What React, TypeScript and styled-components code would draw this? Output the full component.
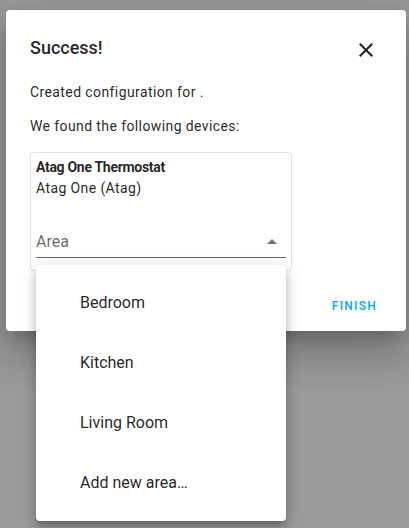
import React from 'react';
import styled, { createGlobalStyle } from 'styled-components';

const GlobalStyle = createGlobalStyle`
	html, body {
		margin: 0;
		padding: 0;
	}
	body {
		font-family: Roboto, 'Noto Sans', sans-serif;
		background: #9a9a9a;
		-webkit-font-smoothing: antialiased;
	}
`;

const Scrim = styled.div`
	min-height: 528px;
	padding: 10px 3px 0 6px;
	box-sizing: border-box;
	background: #9a9a9a;
`;

const Dialog = styled.section`
	position: relative;
	width: 400px;
	background: #fff;
	border-radius: 4px;
	box-shadow: 0 11px 15px -7px rgba(0, 0, 0, 0.2), 0 24px 38px 3px rgba(0, 0, 0, 0.14),
		0 9px 46px 8px rgba(0, 0, 0, 0.12);
`;

const Header = styled.header`
	display: flex;
	justify-content: space-between;
	align-items: center;
	padding: 26px 28px 0 24px;
	height: 24px;
`;

const Title = styled.h2`
	margin: 0;
	font-size: 18px;
	line-height: 24px;
	font-weight: 500;
	color: rgba(0, 0, 0, 0.87);
`;

const CloseButton = styled.button`
	display: flex;
	width: 24px;
	height: 24px;
	padding: 0;
	margin-top: 4px;
	border: 0;
	background: none;
	color: rgba(0, 0, 0, 0.87);
	cursor: pointer;
`;

const Content = styled.div`
	padding: 22px 24px 0;
`;

const Text = styled.p`
	margin: 0 0 14px;
	font-size: 14px;
	line-height: 20px;
	letter-spacing: 0.4px;
	color: rgba(0, 0, 0, 0.87);
`;

const DeviceCard = styled.div`
	margin-top: 16px;
	width: 262px;
	box-sizing: border-box;
	border: 1px solid #e0e0e0;
	border-radius: 4px;
	padding: 4px 5px 12px;
`;

const DeviceLine = styled.div<{ $bold?: boolean }>`
	font-size: 14px;
	line-height: 21px;
	letter-spacing: ${(p) => (p.$bold ? '-0.3px' : '0.4px')};
	font-weight: ${(p) => (p.$bold ? 700 : 400)};
	color: rgba(0, 0, 0, 0.87);
`;

const Field = styled.div`
	position: relative;
	margin-top: 31px;
	padding-bottom: 3px;
	border-bottom: 1px solid rgba(0, 0, 0, 0.6);
`;

const FieldRow = styled.div`
	display: flex;
	justify-content: space-between;
	align-items: center;
	height: 24px;
`;

const Label = styled.span`
	font-size: 16px;
	line-height: 24px;
	color: rgba(0, 0, 0, 0.6);
`;

const Arrow = styled.span`
	width: 0;
	height: 0;
	margin: 0 9px 2px 0;
	border-left: 5px solid transparent;
	border-right: 5px solid transparent;
	border-bottom: 5px solid rgba(0, 0, 0, 0.54);
`;

const Menu = styled.ul`
	position: absolute;
	top: 100%;
	left: 0;
	right: 0;
	margin: 8px 0 0;
	padding: 8px 0;
	list-style: none;
	background: #fff;
	border-radius: 4px;
	z-index: 2;
	box-shadow: 0 5px 5px -3px rgba(0, 0, 0, 0.2), 0 8px 10px 1px rgba(0, 0, 0, 0.14),
		0 3px 14px 2px rgba(0, 0, 0, 0.12);
`;

const MenuItem = styled.li`
	height: 60px;
	line-height: 60px;
	padding-left: 44px;
	font-size: 16px;
	color: rgba(0, 0, 0, 0.87);
`;

const Actions = styled.div`
	display: flex;
	justify-content: flex-end;
	padding: 17px 21px 7px;
`;

const TextButton = styled.button`
	height: 36px;
	padding: 0 8px;
	border: 0;
	background: none;
	font-family: Roboto, sans-serif;
	font-size: 12px;
	font-weight: 500;
	letter-spacing: 1.25px;
	text-transform: uppercase;
	color: #03a9f4;
	cursor: pointer;
`;

const areas = ['Bedroom', 'Kitchen', 'Living Room', 'Add new area…'];

const App = () => {
	return (
		<Scrim>
			<GlobalStyle />
			<Dialog>
				<Header>
					<Title>Success!</Title>
					<CloseButton aria-label="Close">
						<svg width="24" height="24" viewBox="0 0 24 24">
							<path
								fill="currentColor"
								d="M19,6.41L17.59,5L12,10.59L6.41,5L5,6.41L10.59,12L5,17.59L6.41,19L12,13.41L17.59,19L19,17.59L13.41,12L19,6.41Z"
							/>
						</svg>
					</CloseButton>
				</Header>
				<Content>
					<Text>Created configuration for .</Text>
					<Text>We found the following devices:</Text>
					<DeviceCard>
						<DeviceLine $bold>Atag One Thermostat</DeviceLine>
						<DeviceLine>Atag One (Atag)</DeviceLine>
						<Field>
							<FieldRow>
								<Label>Area</Label>
								<Arrow />
							</FieldRow>
							<Menu>
								{areas.map((a) => (
									<MenuItem key={a}>{a}</MenuItem>
								))}
							</Menu>
						</Field>
					</DeviceCard>
				</Content>
				<Actions>
					<TextButton>Finish</TextButton>
				</Actions>
			</Dialog>
		</Scrim>
	);
};

export default App;
